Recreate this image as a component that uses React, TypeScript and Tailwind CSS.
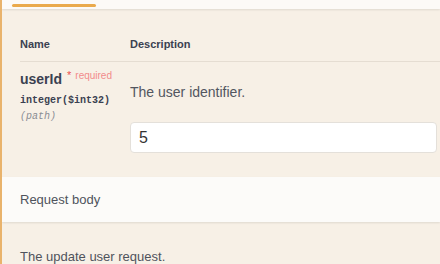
import React from "react";

export default function App() {
  return (
    <div
      className="w-[440px] h-[264px] overflow-hidden border-l-2 border-[#e9b36c] bg-[#f7f0e6] text-[#3b4151]"
      style={{ fontFamily: '"Liberation Sans", Arial, sans-serif' }}
    >
      {/* tab header */}
      <div className="relative h-[9px] bg-[#fcfaf7] shadow-[0_1px_2px_rgba(0,0,0,0.1)]">
        <div className="ml-[10px] pt-[4px]">
          <div className="w-[84px] h-[3px] rounded-sm bg-[#eaaa4c]" />
        </div>
      </div>

      {/* parameters table */}
      <div className="pl-[18px] pt-[28px] pb-[24px]">
        <div className="flex border-b border-[#e5ddd2] pb-[10px] text-[11px] font-bold leading-[14px]">
          <div className="w-[110px]">Name</div>
          <div>Description</div>
        </div>
        <div className="flex">
          <div className="w-[110px] pt-[8px]">
            <div className="leading-[18px] whitespace-nowrap">
              <span className="text-[14px] font-bold">userId</span>
              <span className="relative top-[-5px] ml-[5px] text-[11px] text-[#ec5050]">*</span>
              <span className="relative top-[-5px] ml-[4px] text-[10px] text-[#f28b8b]">required</span>
            </div>
            <div
              className="mt-[3px] text-[10px] leading-[16px] font-semibold text-[#3b4151]"
              style={{ fontFamily: '"Liberation Mono", "Courier New", monospace' }}
            >
              integer($int32)
            </div>
            <div
              className="text-[10px] leading-[16px] italic text-[#8a8d94]"
              style={{ fontFamily: '"Liberation Mono", "Courier New", monospace' }}
            >
              (path)
            </div>
          </div>
          <div className="flex-1 pt-[20px] pr-[3px]">
            <div className="text-[14px] leading-[20px] text-[#52565f]">The user identifier.</div>
            <div className="mt-[20px] h-[31px] rounded-[4px] border border-[#e4e0da] bg-white px-[8px] flex items-center text-[16px] text-[#333]">
              5
            </div>
          </div>
        </div>
      </div>

      {/* request body band */}
      <div className="relative bg-[#fcfbf9] pl-[18px] pt-[14px] pb-[13px] text-[13px] leading-[18px] text-[#4f535c] shadow-[0_1px_2px_rgba(0,0,0,0.1)]">
        Request body
      </div>

      <div className="pl-[18px] pt-[26px] text-[13px] leading-[18px] text-[#4f535c]">
        The update user request.
      </div>
    </div>
  );
}
